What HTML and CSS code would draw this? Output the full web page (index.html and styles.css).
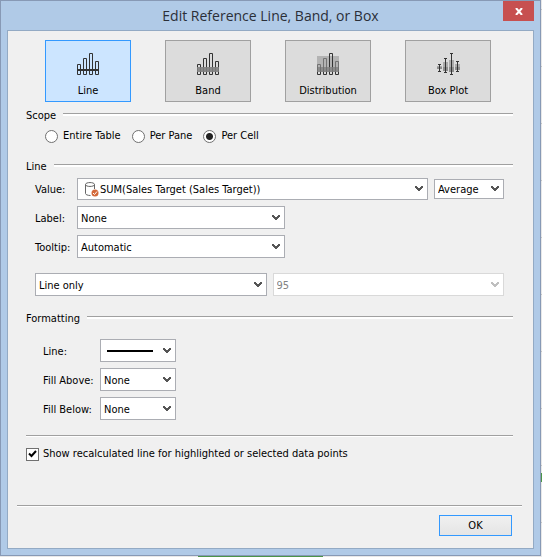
FILE: index.html
```html
<!DOCTYPE html>
<html lang="en">
<head>
<meta charset="utf-8">
<title>Edit Reference Line, Band, or Box</title>
<link rel="stylesheet" href="styles.css">
</head>
<body>
<svg class="defs" aria-hidden="true">
  <symbol id="chevron" viewBox="0 0 8 6"><path d="M0 0h2v1h1v1h2V1h1V0h2v2H7v1H6v1H5v1H3V4H2V3H1V2H0z"/></symbol>
  <symbol id="bars" viewBox="0 0 22 22"><path d="M.5 11.500h3v10h-3zM6.500 5.500h3v16h-3zM12.500 .5h3v21h-3zM18.500 8.500h3v13h-3z" fill="none" stroke="#333"/></symbol>
</svg>
<main class="dialog">
  <header class="titlebar">
    <h1>Edit Reference Line, Band, or Box</h1>
    <button class="close" type="button" aria-label="Close"><svg width="8" height="7" viewBox="0 0 8 7"><path d="M1 0l6 7M7 0L1 7" stroke="#fff" stroke-width="2"/></svg></button>
  </header>
  <form class="panel">
    <div class="tiles">
      <button class="tile selected" type="button">
        <svg width="22" height="22"><use href="#bars"/><path d="M0 16h22v2H0z" fill="#333"/></svg>
        Line</button>
      <button class="tile" type="button">
        <svg width="22" height="22"><use href="#bars"/><path d="M0 14h22v5H0z" fill="#808080" opacity=".9"/></svg>
        Band</button>
      <button class="tile" type="button">
        <svg width="22" height="22"><path d="M0 3h22v16H0z" fill="#b3b3b3"/><use href="#bars"/><path d="M0 3h12v11H0zM16 3h6v11h-6z" fill="#b3b3b3" opacity=".5"/><path d="M0 14h22v5H0z" fill="#808080" opacity=".8"/></svg>
        Distribution</button>
      <button class="tile" type="button">
        <svg width="23" height="22"><path d="M0 13h5v3H0zM6 9h5v9H6zM12 7h5v12h-5zM18 11h5v6h-5z" fill="#aaa"/><path d="M0 14h5v2H0zM6 14h5v4H6zM12 14h5v5h-5zM18 14h5v3h-5z" fill="#8c8c8c"/><path d="M2.500 11v7M1 11.500h3M1 18.500h3M8.500 5v14M7 5.500h3M7 19.500h3M14.500 0v22M13 .5h3M13 21.500h3M20.500 8v10M19 8.500h3M19 18.500h3" stroke="#333"/></svg>
        Box Plot</button>
    </div>

    <h2><span>Scope</span></h2>
    <div class="radios">
      <label><input type="radio" name="scope">Entire Table</label>
      <label><input type="radio" name="scope">Per Pane</label>
      <label><input type="radio" name="scope" checked>Per Cell</label>
    </div>

    <h2><span>Line</span></h2>
    <div class="fields">
      <label for="value">Value:</label>
      <div class="pair">
        <div class="combo value"><select id="value"><option>SUM(Sales Target (Sales Target))</option></select>
          <svg class="source" width="14" height="15" viewBox="0 0 14 15"><path d="M.5 2.500v9c0 1 2 2 5 2M9.500 2.500V7M.5 2.500c0-2.600 9-2.600 9 0s-9 2.600-9 0z" fill="none" stroke="#666"/><circle cx="10" cy="11" r="3.500" fill="#d4693a"/><path d="M8 11l1.500 1.500 2.500-3" fill="none" stroke="#fff"/></svg>
          <svg class="arrow"><use href="#chevron"/></svg></div>
        <div class="combo average"><select aria-label="Aggregation"><option>Average</option></select><svg class="arrow"><use href="#chevron"/></svg></div>
      </div>
      <label for="label">Label:</label>
      <div class="combo medium"><select id="label"><option>None</option></select><svg class="arrow"><use href="#chevron"/></svg></div>
      <label for="tooltip">Tooltip:</label>
      <div class="combo medium"><select id="tooltip"><option>Automatic</option></select><svg class="arrow"><use href="#chevron"/></svg></div>
    </div>
    <div class="confidence">
      <div class="combo"><select aria-label="Confidence"><option>Line only</option></select><svg class="arrow"><use href="#chevron"/></svg></div>
      <div class="combo disabled"><select aria-label="Confidence level" disabled><option>95</option></select><svg class="arrow"><use href="#chevron"/></svg></div>
    </div>

    <h2><span>Formatting</span></h2>
    <div class="fields formatting">
      <label for="stroke">Line:</label>
      <div class="combo small"><select id="stroke"><option></option></select><svg class="stroke" width="46" height="2"><path d="M0 0h46v2H0z"/></svg><svg class="arrow"><use href="#chevron"/></svg></div>
      <label for="above">Fill Above:</label>
      <div class="combo small"><select id="above"><option>None</option></select><svg class="arrow"><use href="#chevron"/></svg></div>
      <label for="below">Fill Below:</label>
      <div class="combo small"><select id="below"><option>None</option></select><svg class="arrow"><use href="#chevron"/></svg></div>
    </div>

    <hr class="rule">
    <label class="recalc"><span class="check"><input type="checkbox" checked><svg width="9" height="8" viewBox="0 0 9 8"><path d="M1 3.500l2.500 2.500L8 1" fill="none" stroke="#000" stroke-width="2"/></svg></span>Show recalculated line for highlighted or selected data points</label>

    <footer>
      <button class="ok" type="button">OK</button>
    </footer>
  </form>
</main>
</body>
</html>
```
FILE: styles.css
```css
* { box-sizing: border-box; }

body {
  margin: 0;
  min-height: 100vh;
  padding: 0 1px 1px 0;
  display: flex;
  font: 11px/14px "DejaVu Sans Condensed", "DejaVu Sans", sans-serif;
  color: #000;
  background:
    linear-gradient(#4b9448, #4b9448) 198px 100% / 125px 1px no-repeat,
    linear-gradient(#4b9448, #4b9448) 100% 473px / 1px 9px no-repeat,
    repeating-linear-gradient(#e8e8e8 0 9px, #c4c4c4 9px 10px, #e8e8e8 10px 57px);
}

.defs { position: absolute; width: 0; height: 0; }

.dialog {
  flex: 1;
  display: flex;
  flex-direction: column;
  padding: 0 6px 6px;
  border: 1px solid #8799b5;
  background: #b0cae7;
}

.titlebar {
  display: grid;
  grid-template-columns: 1fr auto 1fr;
  height: 29px;
}

h1 {
  grid-column: 2;
  margin: 0;
  font: 14px/29px "Open Sans", "Noto Sans", sans-serif;
  color: #2b2f38;
}

.close {
  justify-self: end;
  display: grid;
  place-items: center;
  width: 31px;
  height: 20px;
  padding: 0;
  border: 0;
  background: #c75050;
}

.panel {
  flex: 1;
  display: flex;
  flex-direction: column;
  border: 1px solid #93aac4;
  padding: 9px 20px 12px 18px;
  background: #f0f0f0;
}

.tiles {
  display: flex;
  gap: 34px;
  margin: 0 22px 7px 19px;
}

.tile {
  flex: 1;
  display: flex;
  flex-direction: column;
  align-items: center;
  gap: 9px;
  height: 62px;
  padding: 12px 0 0;
  border: 1px solid #a0a0a0;
  background: #dcdcdc;
  font: inherit;
  color: inherit;
}

.tile.selected {
  border-color: #3399ff;
  background: #cce5ff;
}

h2 {
  display: flex;
  align-items: center;
  gap: 7px;
  margin: 0;
  font: inherit;
}

h2::after {
  content: "";
  flex: 1;
  height: 2px;
  margin-bottom: 4px;
  border-top: 1px solid #a0a0a0;
  background: #fff;
}

.radios {
  display: flex;
  gap: 11px;
  margin: 6px 0 17px 19px;
}

.radios label {
  display: flex;
  align-items: center;
  gap: 5px;
}

.radios input {
  appearance: none;
  width: 13px;
  height: 13px;
  margin: 0;
  border: 1px solid #707070;
  border-radius: 50%;
  background: #fff;
}

.radios input:checked {
  background: radial-gradient(circle, #222 0 3px, #fff 4px);
}

.fields {
  display: grid;
  grid-template-columns: 42px 1fr;
  align-items: center;
  row-gap: 6px;
  margin: 4px 9px 15px;
}

.fields label { padding-top: 2px; }

.pair {
  display: flex;
  align-items: center;
  gap: 6px;
}

.combo { display: grid; align-items: center; }
.combo > * { grid-area: 1 / 1; }

.combo select {
  appearance: none;
  width: 100%;
  height: 23px;
  padding: 2px 16px 0 3px;
  border: 1px solid #abadb3;
  border-radius: 0;
  background: #fff;
  font: inherit;
  color: #000;
}

.combo svg { pointer-events: none; }

.arrow {
  justify-self: end;
  width: 8px;
  height: 6px;
  margin-right: 5px;
  fill: #555;
}

.value { flex: 1; }
.combo.value select { height: 22px; padding-left: 22px; }
.source { margin-left: 8px; }
.average { width: 70px; }
.combo.average select { height: 20px; }
.medium { width: 208px; }
.small { width: 76px; }
.stroke { margin-left: 7px; }

.combo.disabled select {
  border-color: #d9d9d9;
  color: #838383;
  opacity: 1;
}

.disabled .arrow { fill: #bfbfbf; }

.confidence {
  display: grid;
  grid-template-columns: 1fr 1fr;
  gap: 6px;
  margin: 0 9px 16px;
}

.formatting {
  grid-template-columns: 57px 1fr;
  margin: 13px 9px 15px 17px;
}

.rule {
  width: 100%;
  height: 2px;
  margin: 0 0 10px;
  border: 0;
  border-top: 1px solid #a0a0a0;
  background: #fff;
}

.recalc {
  display: flex;
  align-items: center;
  gap: 4px;
}

.check { display: grid; place-items: center; }
.check > * { grid-area: 1 / 1; }

.check input {
  appearance: none;
  width: 13px;
  height: 13px;
  margin: 0;
  border: 1px solid #707070;
  background: #fff;
}

.check svg { pointer-events: none; }
.check input:not(:checked) + svg { visibility: hidden; }

footer {
  display: flex;
  justify-content: flex-end;
  margin: auto -9px 0;
  padding: 9px 10px 0 0;
  border-top: 1px solid #a0a0a0;
  box-shadow: inset 0 1px #fff;
}

.ok {
  width: 73px;
  height: 21px;
  padding: 0;
  border: 1px solid #3399ff;
  background: linear-gradient(#f0f0f0, #e5e5e5);
  font: inherit;
  color: inherit;
}
```
